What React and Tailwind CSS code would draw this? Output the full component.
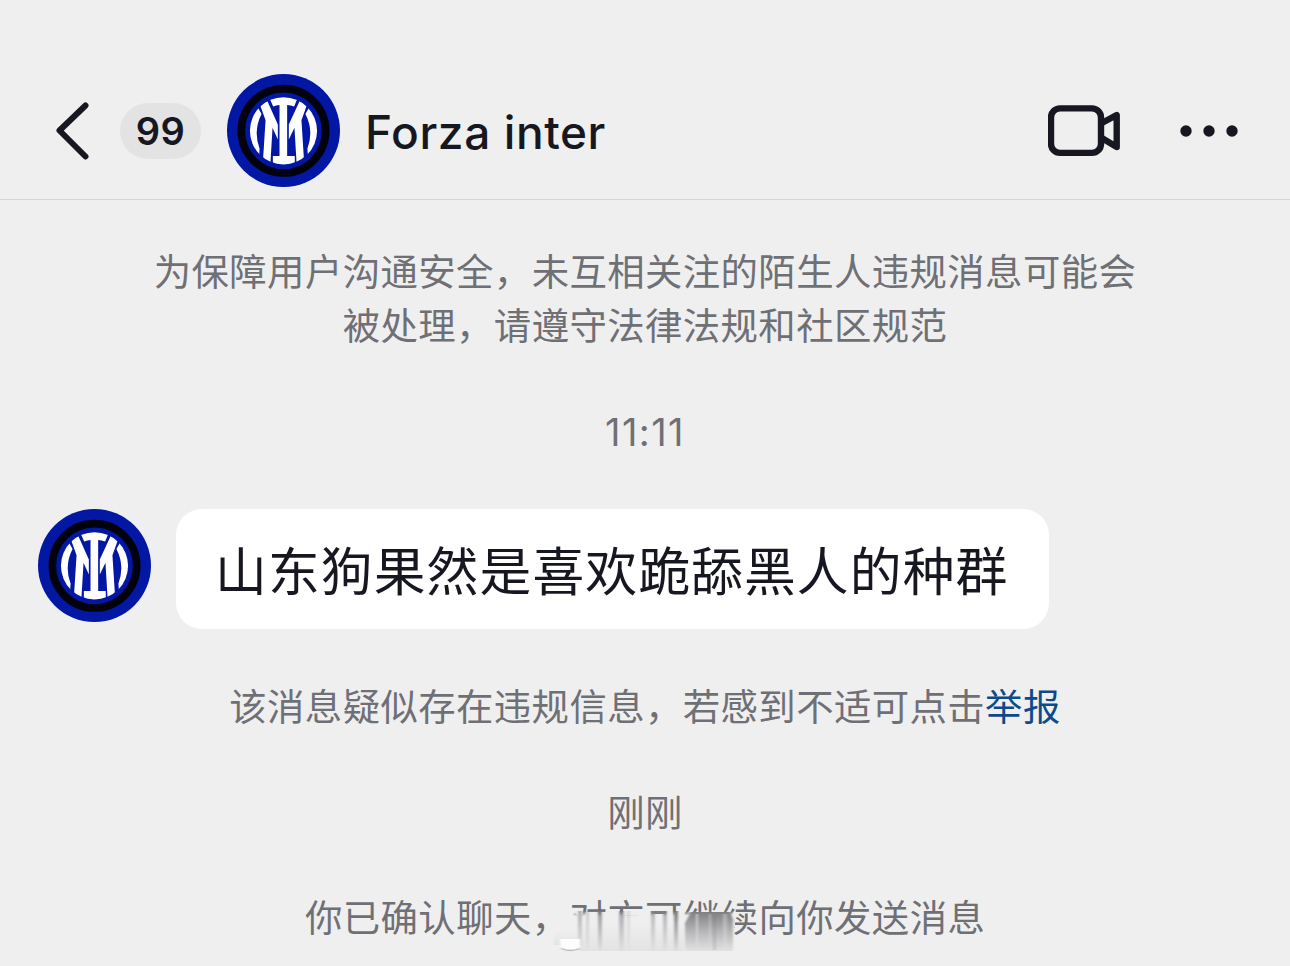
const notices = {
  safety: ["为保障用户沟通安全，未互相关注的陌生人违规消息可能会", "被处理，请遵守法律法规和社区规范"],
  report: "该消息疑似存在违规信息，若感到不适可点击",
  confirmed: "你已确认聊天，对方可继续向你发送消息",
};

function ClubAvatar({ id }) {
  return (
    <svg className="h-[113px] w-[113px] shrink-0" viewBox="0 0 340 340">
      <defs>
        <clipPath id={id}>
          <circle cx="170" cy="171" r="101" />
        </clipPath>
      </defs>
      <circle cx="170" cy="170" r="170" fill="#0217a3" />
      <circle cx="170" cy="171" r="127" fill="none" stroke="#02020f" strokeWidth="23" />
      <g clipPath={`url(#${id})`} fill="#fff">
        <path d="M125 66 L139 98 Q148 94 158 93 V247 H138 V280 H204 V247 H181 V93 Q192 94 202 98 L215 66 Z" />
        <path d="M99 92 L119 76 L153 152 V197 L137 162 L130 280 H107 L116 139 Z" />
        <path d="M241 92 L221 76 L186 152 V197 L203 162 L210 280 H233 L224 139 Z" />
        <path d="M88 92 L104 120 Q78 171 98 224 L96 258 L40 240 V92 Z" />
        <path d="M252 92 L236 120 Q262 171 242 224 L244 258 L300 240 V92 Z" />
      </g>
    </svg>
  );
}

function Header() {
  return (
    <header className="flex h-[200px] items-center border-b border-[#d5d5d6] pt-[62px] pr-[52px] pl-[56px] text-[#171722]">
      <svg className="h-[58px] w-[34px] shrink-0" viewBox="0 0 34 58" fill="none" stroke="currentColor" strokeWidth="6" strokeLinecap="round" strokeLinejoin="round">
        <path d="M29.5 3.5 L3.5 28.5 L29.5 54.5" />
      </svg>
      <span className="ml-[30px] flex h-[56px] w-[81px] items-center justify-center rounded-full bg-[#e3e3e4] font-['Inter','Liberation_Sans',sans-serif] text-[38px] font-semibold tracking-[0.5px]">
        99
      </span>
      <div className="ml-[26px] flex">
        <ClubAvatar id="crest-header" />
      </div>
      <h1 className="ml-[25px] pt-[2px] font-['Inter','Liberation_Sans',sans-serif] text-[46px] leading-none font-medium tracking-[0.6px]">
        Forza inter
      </h1>
      <svg className="ml-auto h-[52px] w-[74px]" viewBox="0 0 74 52" fill="none" stroke="currentColor" strokeWidth="6.4" strokeLinejoin="round">
        <rect x="3" y="3.4" width="50" height="44.5" rx="9" />
        <path d="M53 18.5 L68.7 10 V42 L53 32.5" />
      </svg>
      <svg className="ml-[58px] h-[12px] w-[58px]" viewBox="0 0 58 12" fill="currentColor">
        <circle cx="6" cy="6" r="5.7" />
        <circle cx="29" cy="6" r="5.7" />
        <circle cx="52" cy="6" r="5.7" />
      </svg>
    </header>
  );
}

const streaks = [
  { x: 26, w: 4, opacity: 0.5 },
  { x: 34, w: 3, opacity: 0.3 },
  { x: 46, w: 4, opacity: 0.7 },
  { x: 67, w: 5, opacity: 0.55 },
  { x: 75, w: 3, opacity: 0.2 },
  { x: 99, w: 4, opacity: 0.45 },
  { x: 111, w: 4, opacity: 0.5 },
  { x: 122, w: 4, opacity: 0.9 },
];

// Smeared patch over the lower half of the last notice
function Smudge() {
  return (
    <svg className="absolute top-[22px] left-[247px] h-[44px] w-[186px]" viewBox="0 0 186 44">
      <defs>
        <linearGradient id="cover" x1="0" y1="0" x2="0" y2="1">
          <stop offset="0" stopColor="#efefef" stopOpacity="0" />
          <stop offset="0.12" stopColor="#efefef" />
          <stop offset="1" stopColor="#efefef" />
        </linearGradient>
        <linearGradient id="streak" x1="0" y1="0" x2="0" y2="1">
          <stop offset="0" stopColor="#6f7076" />
          <stop offset="0.5" stopColor="#a9a9ac" />
          <stop offset="1" stopColor="#dfdfe0" />
        </linearGradient>
        <linearGradient id="haze" x1="0" y1="0" x2="0" y2="1">
          <stop offset="0" stopColor="#efefef" />
          <stop offset="1" stopColor="#e3e3e4" />
        </linearGradient>
        <linearGradient id="patch" x1="0" y1="0" x2="0" y2="1">
          <stop offset="0" stopColor="#808083" />
          <stop offset="0.5" stopColor="#b6b6b8" />
          <stop offset="1" stopColor="#e2e2e3" />
        </linearGradient>
        <filter id="soft">
          <feGaussianBlur stdDeviation="1.1 0.7" />
        </filter>
      </defs>
      <rect x="17" y="0" width="165" height="43" fill="url(#cover)" />
      <g filter="url(#soft)">
        <rect x="2" y="20" width="30" height="14" fill="url(#haze)" />
        <rect x="30" y="10" width="102" height="30" fill="url(#haze)" />
        {streaks.map((s) => (
          <rect key={s.x} x={s.x} y="0" width={s.w} height="40" fill="url(#streak)" opacity={s.opacity} />
        ))}
        <rect x="101" y="0" width="13" height="3" fill="#7b7b80" />
        <path d="M139 1 H178 L181 8 V40 H133 V12 Z" fill="url(#patch)" />
        <rect x="144" y="3" width="2" height="36" fill="#dcdcde" opacity="0.7" />
        <rect x="157" y="3" width="2" height="36" fill="#dcdcde" opacity="0.4" />
        <rect x="161" y="3" width="3" height="36" fill="#747478" opacity="0.2" />
        <rect x="171" y="3" width="4" height="36" fill="#dedee0" opacity="0.4" />
        <path d="M8 28 H28 V37 Q19 41 9 36 Z" fill="#fff" />
        <path d="M9 37.5 Q18 41.5 28 37.5" fill="none" stroke="#b9b9bb" strokeWidth="1.3" />
      </g>
    </svg>
  );
}

export default function App() {
  return (
    <div className="h-[966px] w-[1290px] overflow-hidden bg-[#efefef] font-['Noto_Sans_CJK_SC',sans-serif] text-[37.4px] leading-[54px] tracking-[0.4px] text-[#6f7076]">
      <Header />
      <main className="flex flex-col whitespace-nowrap">
        <div className="mt-[43px] text-center">
          {notices.safety.map((line) => (
            <p key={line}>{line}</p>
          ))}
        </div>
        <time className="mt-[54px] text-center font-['Inter','Liberation_Sans',sans-serif] text-[38px] tracking-[1.4px]">11:11</time>
        <div className="mt-[50px] flex items-start pl-[38px]">
          <ClubAvatar id="crest-message" />
          <div className="ml-[25px] flex h-[120px] w-[873px] items-center rounded-[26px] bg-white pb-[1px] pl-[39px] text-[51.8px] leading-none tracking-[1.1px] text-[#171722]">
            山东狗果然是喜欢跪舔黑人的种群
          </div>
        </div>
        <p className="mt-[49px] text-center">
          {notices.report}
          <a className="text-[#0d4a8c]">举报</a>
        </p>
        <p className="mt-[52px] text-center">刚刚</p>
        <div className="relative mx-auto mt-[51px] w-[680px] text-center">
          <p>{notices.confirmed}</p>
          <Smudge />
        </div>
      </main>
    </div>
  );
}
